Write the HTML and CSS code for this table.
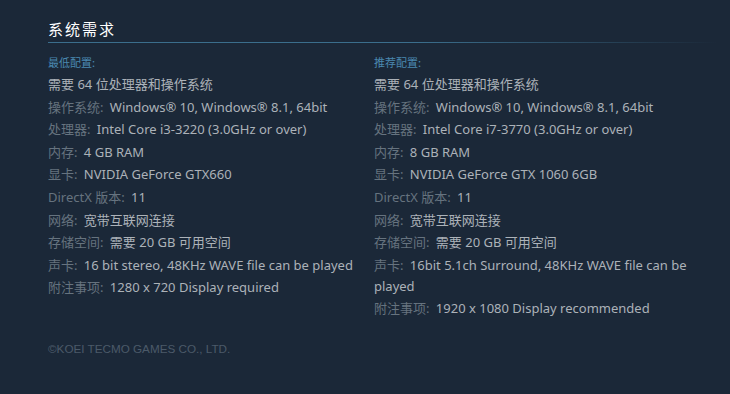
FILE: index.html
```html
<!DOCTYPE html>
<html lang="zh-CN">
<head>
<meta charset="utf-8">
<title>系统需求</title>
<link rel="stylesheet" href="styles.css">
</head>
<body>
<div class="page">
  <h2 class="title">系统需求</h2>
  <div class="cols">
    <div class="col">
      <div class="col-head">最低配置:</div>
      <ul class="reqs">
        <li>需要 64 位处理器和操作系统</li>
        <li><span class="lbl">操作系统:</span> Windows® 10, Windows® 8.1, 64bit</li>
        <li><span class="lbl">处理器:</span> Intel Core i3-3220 (3.0GHz or over)</li>
        <li><span class="lbl">内存:</span> 4 GB RAM</li>
        <li><span class="lbl">显卡:</span> NVIDIA GeForce GTX660</li>
        <li><span class="lbl">DirectX 版本:</span> 11</li>
        <li><span class="lbl">网络:</span> 宽带互联网连接</li>
        <li><span class="lbl">存储空间:</span> 需要 20 GB 可用空间</li>
        <li><span class="lbl">声卡:</span> 16 bit stereo, 48KHz WAVE file can be played</li>
        <li><span class="lbl">附注事项:</span> 1280 x 720 Display required</li>
      </ul>
    </div>
    <div class="col">
      <div class="col-head">推荐配置:</div>
      <ul class="reqs">
        <li>需要 64 位处理器和操作系统</li>
        <li><span class="lbl">操作系统:</span> Windows® 10, Windows® 8.1, 64bit</li>
        <li><span class="lbl">处理器:</span> Intel Core i7-3770 (3.0GHz or over)</li>
        <li><span class="lbl">内存:</span> 8 GB RAM</li>
        <li><span class="lbl">显卡:</span> NVIDIA GeForce GTX 1060 6GB</li>
        <li><span class="lbl">DirectX 版本:</span> 11</li>
        <li><span class="lbl">网络:</span> 宽带互联网连接</li>
        <li><span class="lbl">存储空间:</span> 需要 20 GB 可用空间</li>
        <li><span class="lbl">声卡:</span> 16bit 5.1ch Surround, 48KHz WAVE file can be played</li>
        <li><span class="lbl">附注事项:</span> 1920 x 1080 Display recommended</li>
      </ul>
    </div>
  </div>
  <div class="copy">©KOEI TECMO GAMES CO., LTD.</div>
</div>
</body>
</html>
```
FILE: styles.css
```css
html, body {
  margin: 0;
  padding: 0;
  background: #1b2838;
}
body {
  height: 394px;
  font-family: "Noto Sans", "Noto Sans CJK SC", sans-serif;
}
.page {
  padding: 19px 12px 0 48px;
}
.title {
  margin: 0;
  font-size: 15px;
  font-weight: normal;
  letter-spacing: 2px;
  line-height: 20px;
  color: #ffffff;
  font-family: "Noto Sans CJK SC", sans-serif;
  padding-bottom: 3px;
  position: relative;
}
.title::after {
  content: "";
  display: block;
  height: 1px;
  background: linear-gradient(to right, #3b6e8c 0%, #3b6e8c 55%, rgba(59,110,140,0) 100%);
  position: absolute;
  left: 0;
  right: 0;
  bottom: -1px;
}
.cols {
  display: grid;
  grid-template-columns: 310px 316px;
  column-gap: 16px;
  margin-top: 12px;
}
.col-head {
  font-size: 11px;
  line-height: 16px;
  color: #4a88b0;
  font-family: "Noto Sans CJK SC", sans-serif;
  margin-bottom: 4px;
}
.reqs {
  list-style: none;
  margin: 0;
  padding: 0;
  font-size: 13px;
  line-height: 20.8px;
  color: #acb2b8;
}
.reqs li + li {
  margin-top: 1.8px;
}
.lbl {
  color: #66737f;
  margin-right: 3px;
}
.copy {
  margin-top: 23px;
  font-family: "Liberation Sans", Arial, sans-serif;
  font-size: 11.7px;
  line-height: 14px;
  color: #4b5a69;
}
```
